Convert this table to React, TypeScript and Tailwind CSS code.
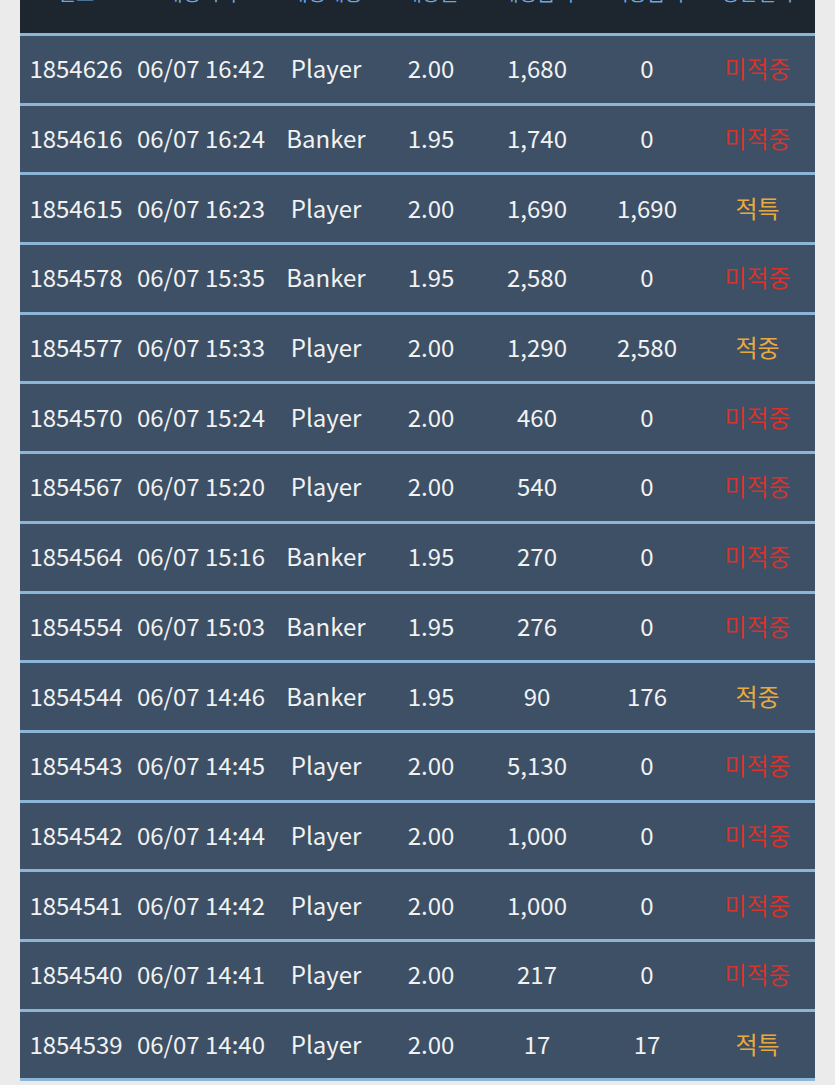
import React from "react";

type Row = {
  id: string;
  time: string;
  pick: string;
  odds: string;
  bet: string;
  win: string;
  result: string;
};

const rows: Row[] = [
  { id: "1854626", time: "06/07 16:42", pick: "Player", odds: "2.00", bet: "1,680", win: "0", result: "미적중" },
  { id: "1854616", time: "06/07 16:24", pick: "Banker", odds: "1.95", bet: "1,740", win: "0", result: "미적중" },
  { id: "1854615", time: "06/07 16:23", pick: "Player", odds: "2.00", bet: "1,690", win: "1,690", result: "적특" },
  { id: "1854578", time: "06/07 15:35", pick: "Banker", odds: "1.95", bet: "2,580", win: "0", result: "미적중" },
  { id: "1854577", time: "06/07 15:33", pick: "Player", odds: "2.00", bet: "1,290", win: "2,580", result: "적중" },
  { id: "1854570", time: "06/07 15:24", pick: "Player", odds: "2.00", bet: "460", win: "0", result: "미적중" },
  { id: "1854567", time: "06/07 15:20", pick: "Player", odds: "2.00", bet: "540", win: "0", result: "미적중" },
  { id: "1854564", time: "06/07 15:16", pick: "Banker", odds: "1.95", bet: "270", win: "0", result: "미적중" },
  { id: "1854554", time: "06/07 15:03", pick: "Banker", odds: "1.95", bet: "276", win: "0", result: "미적중" },
  { id: "1854544", time: "06/07 14:46", pick: "Banker", odds: "1.95", bet: "90", win: "176", result: "적중" },
  { id: "1854543", time: "06/07 14:45", pick: "Player", odds: "2.00", bet: "5,130", win: "0", result: "미적중" },
  { id: "1854542", time: "06/07 14:44", pick: "Player", odds: "2.00", bet: "1,000", win: "0", result: "미적중" },
  { id: "1854541", time: "06/07 14:42", pick: "Player", odds: "2.00", bet: "1,000", win: "0", result: "미적중" },
  { id: "1854540", time: "06/07 14:41", pick: "Player", odds: "2.00", bet: "217", win: "0", result: "미적중" },
  { id: "1854539", time: "06/07 14:40", pick: "Player", odds: "2.00", bet: "17", win: "17", result: "적특" },
];

const headers = ["번호", "배팅시각", "배팅내용", "배당률", "배팅금액", "적중금액", "정산결과"];

const cols = "grid grid-cols-[112px_138px_112px_98px_114px_106px_115px]";

export default function App() {
  return (
    <div
      className="h-[1085px] overflow-hidden bg-[#ebebeb] px-5"
      style={{ fontFamily: '"Noto Sans CJK KR", "Noto Sans", sans-serif' }}
    >
      <div className="-mt-[40px] bg-[#3d5065]">
        <div className={`${cols} h-[73px] bg-[#1d252e] pt-[21px] text-[20px] leading-[24px] text-[#6ea7dc]`}>
          {headers.map((h) => (
            <div key={h} className="text-center">{h}</div>
          ))}
        </div>

        {rows.map((r) => (
          <div
            key={r.id}
            className={`${cols} h-[69.7px] items-center border-t-[3px] border-[#8cb6d8] pb-[2px] text-[24px] text-[#f2f2f2]`}
          >
            <div className="text-center">{r.id}</div>
            <div className="text-center">{r.time}</div>
            <div className="text-center">{r.pick}</div>
            <div className="text-center">{r.odds}</div>
            <div className="text-center">{r.bet}</div>
            <div className="text-center">{r.win}</div>
            <div
              className={
                r.result === "미적중"
                  ? "text-center text-[#d6332c]"
                  : "text-center text-[#eaa93e]"
              }
            >
              {r.result}
            </div>
          </div>
        ))}
        <div className="h-[3px] bg-[#8cb6d8]" />
      </div>
    </div>
  );
}
